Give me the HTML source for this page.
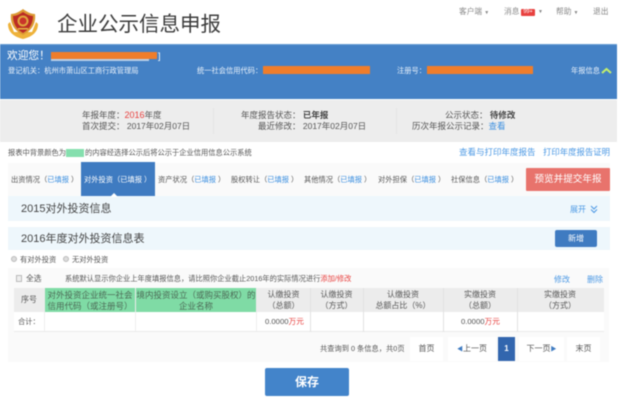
<!DOCTYPE html>
<html><head><meta charset="utf-8">
<style>
html,body{margin:0;padding:0;background:#fff}
body{width:621px;height:405px;overflow:hidden;position:relative;font-family:"Liberation Sans","Noto Sans CJK SC",sans-serif;color:#555}
#p{position:absolute;left:0;top:0;width:621px;height:405px;filter:blur(.45px)}
.a{position:absolute;white-space:nowrap}
.b{position:absolute}
.s{font-size:7.7px;line-height:10px}
.m{font-size:8.5px;line-height:10px;color:#555}
.t{font-size:7.25px;line-height:10px;top:175px}
.w{font-size:7.25px;line-height:10px;top:66px;color:#eaf2fb}
.l{color:#3b8fe0}
.o{position:absolute;background:#ef7d2b}
.th{position:absolute;top:288px;height:24px;font-size:8px;line-height:10.5px;text-align:center;padding-top:2px;box-sizing:border-box;color:#555}
.g{font-size:8.5px;color:#4d6b57}
.pg{position:absolute;top:337px;height:24px;line-height:24px;background:#fff;text-align:center;font-size:8px;color:#555}
.d{position:absolute;top:288px;width:1px;height:44px;background:#e2e2e2}
</style></head><body><div id="p">
<svg class="b" style="left:7px;top:8px" width="32" height="32" viewBox="0 0 32 32">
<path d="M1 16c0 9 7 13 15 15 8-2 15-6 15-15l-2-2-4 10H7L3 14z" fill="#eeb23a"/>
<path d="M4 6c4 0 8-2 12-5 4 3 8 5 12 5 1 8-2 16-12 21C6 22 3 14 4 6z" fill="#dc9a34"/>
<path d="M6 8c3.500 0 7-2 10-4 3 2 6.500 4 10 4 0 7-3 13-10 17C9 21 6 15 6 8z" fill="#bb2c25"/>
<circle cx="16" cy="13" r="5.500" fill="#e0a63e"/><circle cx="16" cy="13" r="3.500" fill="#c9352a"/>
<path d="M11 20h10v1.500H11z" fill="#e5b445"/>
</svg>
<div class="a" style="left:57px;top:11px;font-size:20.5px;line-height:28px;color:#3c3c3c">企业公示信息申报</div>
<div class="a s" style="left:459px;top:7px;color:#888">客户端 <span style="font-size:5px">▼</span></div>
<div class="a s" style="left:504px;top:7px;color:#888">消息</div>
<div class="b" style="left:521px;top:9px;width:14px;height:7px;background:#e8413f;border-radius:1px;color:#fff;font-size:5.5px;line-height:7px;text-align:center">99+</div>
<div class="a" style="left:538px;top:7px;font-size:5px;line-height:10px;color:#888">▼</div>
<div class="a s" style="left:556px;top:7px;color:#888">帮助 <span style="font-size:5px">▼</span></div>
<div class="a s" style="left:593px;top:7px;color:#888">退出</div>

<div class="b" style="left:0;top:44px;width:617px;height:55px;background:#4481c5;border-top:1px solid #6a9fd6;box-sizing:border-box"></div>
<div class="a" style="left:7px;top:49px;font-size:10.7px;line-height:14px;color:#fff">欢迎您！</div>
<div class="o" style="left:51px;top:52px;width:106px;height:7px"></div>
<div class="b" style="left:51px;top:59px;width:98px;height:2px;background:#b8cfe8"></div>
<div class="a" style="left:158px;top:50px;font-size:9px;line-height:12px;color:#fff">]</div>
<div class="a w" style="left:8px">登记机关：杭州市萧山区工商行政管理局</div>
<div class="a w" style="left:197px">统一社会信用代码：</div>
<div class="o" style="left:263px;top:66px;width:107px;height:8px"></div>
<div class="a w" style="left:397px">注册号：</div>
<div class="o" style="left:427px;top:66px;width:106px;height:8px"></div>
<div class="a w" style="left:571px">年报信息</div>
<svg class="b" style="left:601px;top:67px" width="11" height="7" viewBox="0 0 11 7"><path d="M1 6L5.500 2l4.500 4" fill="none" stroke="#c4ef6a" stroke-width="2"/></svg>

<div class="b" style="left:0;top:100px;width:617px;height:42px;background:#ededed"></div>
<div class="b" style="left:213px;top:108px;width:1px;height:26px;background:#e4e4e4"></div>
<div class="b" style="left:396px;top:108px;width:1px;height:26px;background:#e4e4e4"></div>
<div class="a m" style="left:82px;top:110px">年报年度：<span style="color:#e8413f;font-size:9px">2016</span>年度</div>
<div class="a m" style="left:82px;top:121px">首次提交： 2017年02月07日</div>
<div class="a m" style="left:241px;top:110px">年度报告状态： <b style="color:#444">已年报</b></div>
<div class="a m" style="left:258px;top:121px">最近修改： 2017年02月07日</div>
<div class="a m" style="left:445px;top:110px">公示状态： <b style="color:#444">待修改</b></div>
<div class="a m" style="left:412px;top:121px">历次年报公示记录：<span class="l">查看</span></div>

<div class="a" style="left:8px;top:148px;font-size:7.25px;line-height:10px;color:#555">报表中背景颜色为</div>
<div class="b" style="left:66px;top:149px;width:18px;height:8px;background:#85dfae"></div>
<div class="a" style="left:85px;top:148px;font-size:7.25px;line-height:10px;color:#555">的内容经选择公示后将公示于企业信用信息公示系统</div>
<div class="a" style="left:459px;top:147px;font-size:8.500px;line-height:11px;color:#4b98e4">查看与打印年度报告</div>
<div class="a" style="left:543px;top:147px;font-size:8.400px;line-height:11px;color:#4b98e4">打印年度报告证明</div>

<div class="b" style="left:8px;top:163px;width:602px;height:33px;background:#fafafa"></div>
<div class="b" style="left:81px;top:162px;width:74px;height:35px;background:#3f7bc1"></div>
<div class="a t" style="left:11px">出资情况（<span class="l">已填报</span> ）</div>
<div class="a t" style="left:84px;color:#fff">对外投资（已填报 ）</div>
<div class="a t" style="left:158px">资产状况（<span class="l">已填报</span> ）</div>
<div class="a t" style="left:231px">股权转让（<span class="l">已填报</span> ）</div>
<div class="a t" style="left:304px">其他情况（<span class="l">已填报</span> ）</div>
<div class="a t" style="left:378px">对外担保（<span class="l">已填报</span> ）</div>
<div class="a t" style="left:451px">社保信息（<span class="l">已填报</span> ）</div>
<div class="b" style="left:526px;top:168px;width:84px;height:23px;background:#e8736c;border-radius:1px;color:#fff;font-size:9.600px;line-height:23px;text-align:center">预览并提交年报</div>

<div class="b" style="left:8px;top:196px;width:602px;height:25px;background:#eef7fc"></div>
<div class="b" style="left:110px;top:193px;width:0;height:0;border-left:4px solid transparent;border-right:4px solid transparent;border-bottom:4px solid #fff"></div>
<div class="a" style="left:21px;top:202px;font-size:11px;line-height:15px;color:#444">2015对外投资信息</div>
<div class="a" style="left:570px;top:204px;font-size:8px;line-height:11px;color:#4b98e4">展开</div>
<svg class="b" style="left:590px;top:205px" width="8" height="9" viewBox="0 0 8 9"><path d="M1 1l3 3 3-3M1 4.500l3 3 3-3" fill="none" stroke="#4b98e4" stroke-width="1"/></svg>

<div class="b" style="left:8px;top:227px;width:602px;height:23px;background:#eef7fc"></div>
<div class="a" style="left:21px;top:232px;font-size:11px;line-height:15px;color:#444">2016年度对外投资信息表</div>
<div class="b" style="left:555px;top:230px;width:42px;height:17px;background:#3f7bc1;border-radius:2px;color:#fff;font-size:8px;line-height:17px;text-align:center">新增</div>

<div class="b" style="left:11px;top:256px;width:6px;height:6px;border-radius:50%;background:#ddd;border:1px solid #bbb;box-sizing:border-box"></div>
<div class="a" style="left:20px;top:255px;font-size:7.25px;line-height:10px">有对外投资</div>
<div class="b" style="left:63px;top:256px;width:6px;height:6px;border-radius:50%;background:#ddd;border:1px solid #bbb;box-sizing:border-box"></div>
<div class="a" style="left:72px;top:255px;font-size:7.25px;line-height:10px">无对外投资</div>

<div class="b" style="left:8px;top:268px;width:601px;height:94px;background:#fafafa"></div>
<div class="b" style="left:16px;top:275px;width:6px;height:7px;background:#eee;border:1px solid #bbb;box-sizing:border-box"></div>
<div class="a" style="left:26px;top:274px;font-size:7.700px;line-height:10px">全选</div>
<div class="a" style="left:65px;top:274px;font-size:7.250px;line-height:10px">系统默认显示你企业上年度填报信息，请比照你企业截止2016年的实际情况进行<span style="color:#e8413f">添加/修改</span></div>
<div class="a" style="left:554px;top:275px;color:#4b98e4;font-size:8px;line-height:10px">修改</div>
<div class="a" style="left:587px;top:275px;color:#4b98e4;font-size:8px;line-height:10px">删除</div>

<div class="b" style="left:14px;top:288px;width:590px;height:24px;background:#ececec"></div>
<div class="b" style="left:14px;top:312px;width:590px;height:20px;background:#fff;border-bottom:1px solid #eaeaea;box-sizing:border-box"></div>
<div class="b" style="left:45px;top:288px;width:90px;height:24px;background:#7fdba5"></div>
<div class="b" style="left:136px;top:288px;width:120px;height:24px;background:#7fdba5"></div>
<div class="b" style="left:44px;top:312px;width:1px;height:20px;background:#eee"></div>
<div class="b" style="left:135px;top:312px;width:1px;height:20px;background:#eee"></div>
<div class="b" style="left:256px;top:312px;width:1px;height:20px;background:#eee"></div>
<div class="d" style="left:310px"></div>
<div class="d" style="left:363px"></div>
<div class="d" style="left:443px"></div>
<div class="d" style="left:517px"></div>
<div class="th" style="left:14px;width:30px;padding-top:7px">序号</div>
<div class="th g" style="left:45px;width:90px">对外投资企业统一社会<br>信用代码（或注册号）</div>
<div class="th g" style="left:136px;width:120px">境内投资设立（或购买股权）的<br>企业名称</div>
<div class="th" style="left:257px;width:53px">认缴投资<br>（总额）</div>
<div class="th" style="left:310px;width:53px">认缴投资<br>（方式）</div>
<div class="th" style="left:363px;width:80px">认缴投资<br>总额占比（%）</div>
<div class="th" style="left:443px;width:74px">实缴投资<br>（总额）</div>
<div class="th" style="left:517px;width:86px">实缴投资<br>（方式）</div>
<div class="a" style="left:18px;top:317px;font-size:7.250px;line-height:10px">合计：</div>
<div class="a" style="left:265px;top:317px;font-size:7.700px;line-height:10px">0.0000<span style="color:#e8413f">万元</span></div>
<div class="a" style="left:461px;top:317px;font-size:7.700px;line-height:10px">0.0000<span style="color:#e8413f">万元</span></div>

<div class="a" style="left:320px;top:343px;font-size:7.250px;line-height:12px">共查询到 0 条信息，共0页</div>
<div class="pg" style="left:410px;width:33px">首页</div>
<div class="pg" style="left:448px;width:48px"><span style="color:#3f7bc1;font-size:6px">◀</span>上一页</div>
<div class="pg" style="left:498px;width:17px;background:#3266ae;color:#fff;font-weight:bold">1</div>
<div class="pg" style="left:519px;width:45px">下一页<span style="color:#3f7bc1;font-size:6px">▶</span></div>
<div class="pg" style="left:567px;width:33px">末页</div>

<div class="b" style="left:265px;top:368px;width:84px;height:28px;background:#4384ca;border-radius:2px;color:#fff;font-size:12px;font-weight:bold;line-height:28px;text-align:center">保存</div>
</div></body></html>
